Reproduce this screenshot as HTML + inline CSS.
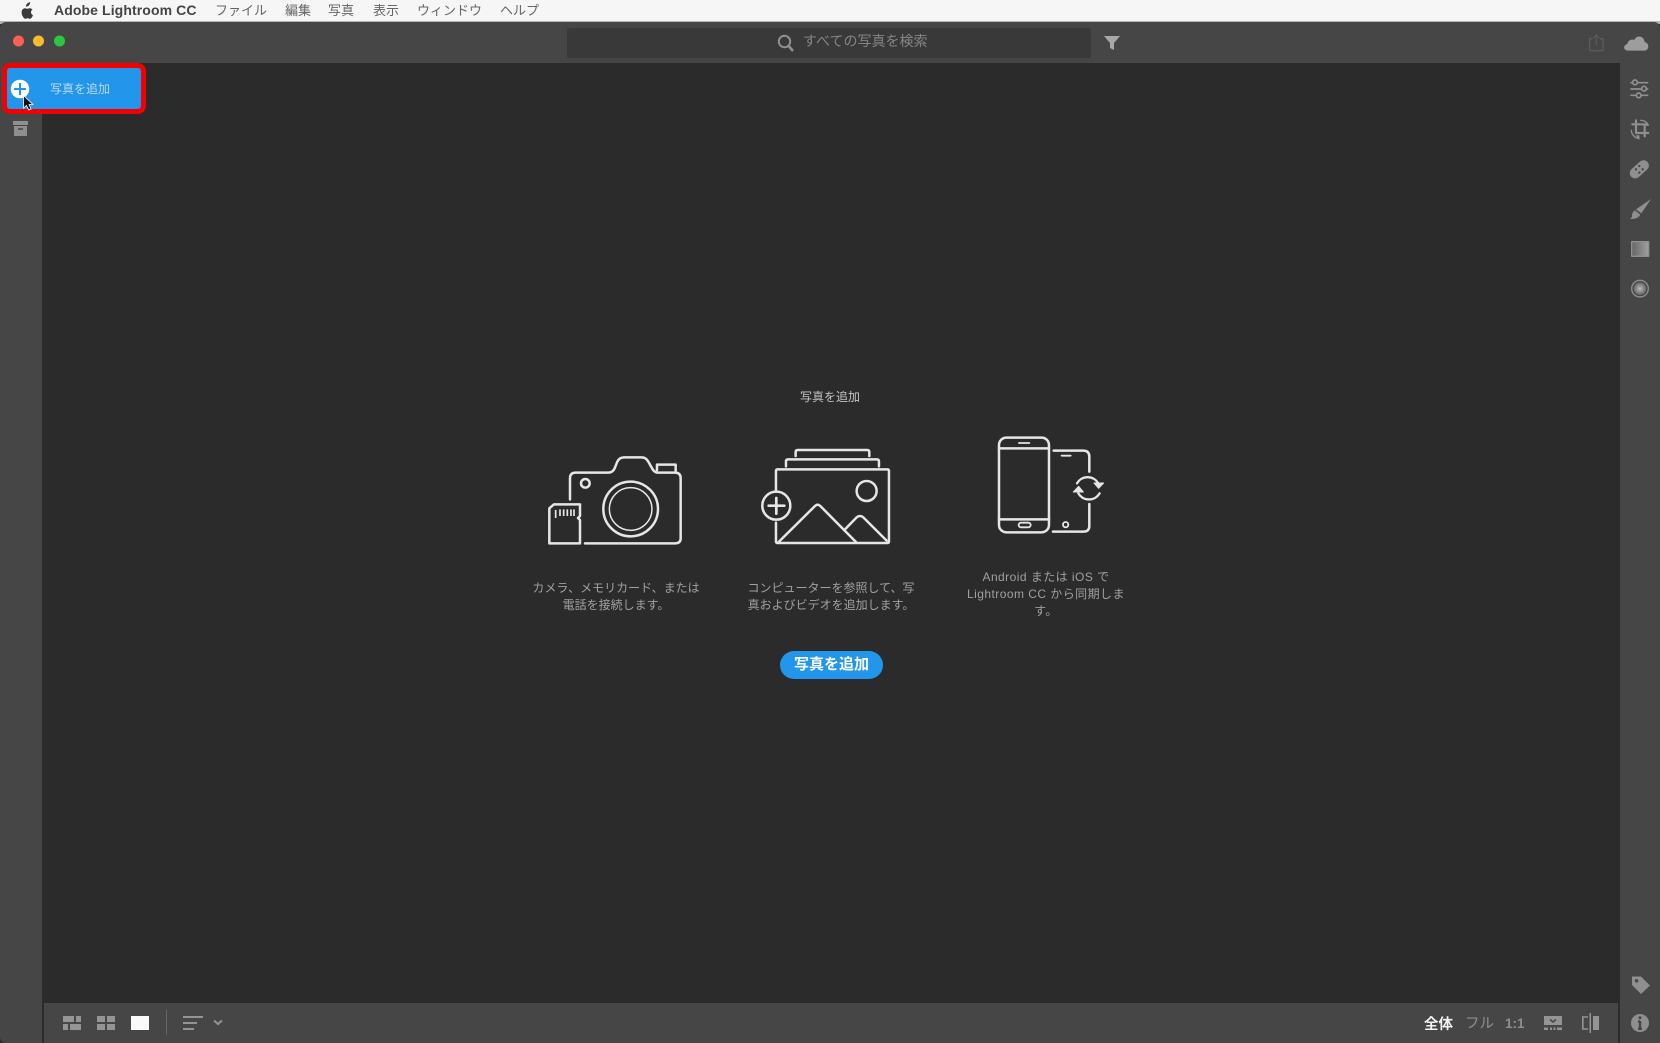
<!DOCTYPE html>
<html lang="ja"><head><meta charset="utf-8"><title>Lightroom</title>
<style>
html,body{margin:0;padding:0;background:#2b2b2b}
#p{position:relative;width:1660px;height:1043px;overflow:hidden;background:#2b2b2b;font-family:"Liberation Sans","Noto Sans CJK JP",sans-serif}
#p div,#p span{position:absolute;white-space:nowrap}
.m{top:1px;height:19px;line-height:19px;font-size:13px;color:#666}
.c{font-size:12px;line-height:17px;color:#a0a0a0;text-align:center}
svg{position:absolute;left:0;top:0;filter:blur(.3px)}
</style></head><body><div id="p">
<div style="left:0;top:0;width:1660px;height:24px;background:#b4b4b4"></div>
<div style="left:0;top:0;width:1660px;height:21px;background:#f6f6f6"></div>
<div style="left:0;top:22px;width:1660px;height:41px;background:#464646;border-radius:6px 6px 0 0"></div>
<div style="left:0;top:63px;width:42px;height:980px;background:#464646;border-radius:0 0 0 6px"></div>
<div style="left:1620px;top:63px;width:40px;height:980px;background:#464646"></div>
<div style="left:44px;top:1003px;width:1574px;height:40px;background:#464646"></div>
<div style="left:567px;top:28px;width:524px;height:30px;background:#393939;border-radius:2px"></div>

<div style="left:54px;top:1px;height:19px;line-height:19px;font-size:14px;font-weight:bold;color:#444;letter-spacing:.1px">Adobe Lightroom CC</div>
<div class="m" style="left:215px">ファイル</div>
<div class="m" style="left:285px">編集</div>
<div class="m" style="left:328px">写真</div>
<div class="m" style="left:373px">表示</div>
<div class="m" style="left:417px">ウィンドウ</div>
<div class="m" style="left:500px">ヘルプ</div>

<div style="left:803px;top:31px;height:20px;line-height:20px;font-size:14px;color:#858585">すべての写真を検索</div>

<div style="left:2px;top:63px;width:134px;height:41px;background:#2196ea;border:5.500px solid #f50000;border-radius:8px"></div>
<div style="left:50px;top:80px;height:18px;line-height:18px;font-size:12px;color:#b9dcf7">写真を追加</div>

<div class="c" style="left:760px;top:389px;width:140px;color:#c4c4c4;font-size:12px">写真を追加</div>
<div class="c" style="left:526px;top:580px;width:180px">カメラ、メモリカード、または<br>電話を接続します。</div>
<div class="c" style="left:741px;top:580px;width:180px">コンピューターを参照して、写<br>真およびビデオを追加します。</div>
<div class="c" style="left:956px;top:568.500px;width:180px;letter-spacing:.45px">Android または iOS で<br>Lightroom CC から同期しま<br>す。</div>
<div style="left:780px;top:651px;width:103px;height:28px;line-height:28px;background:#2196ea;border-radius:14px;color:#fff;font-weight:bold;font-size:15px;text-align:center">写真を追加</div>

<div style="left:1424px;top:1015px;height:20px;line-height:20px;font-size:14.5px;font-weight:bold;color:#f2f2f2">全体</div>
<div style="left:1465px;top:1013.500px;height:20px;line-height:20px;font-size:14.5px;color:#8f8f8f">フル</div>
<div style="left:1505px;top:1013.500px;height:20px;line-height:20px;font-size:13.5px;font-weight:bold;color:#8f8f8f">1:1</div>

<svg width="1660" height="1043" viewBox="0 0 1660 1043" fill="none">
<defs>
<linearGradient id="g1" x1="0" x2="1" y1="0" y2="0"><stop offset="0" stop-color="#666"/><stop offset="1" stop-color="#a0a0a0"/></linearGradient>
<radialGradient id="g2"><stop offset="0" stop-color="#bbb"/><stop offset="1" stop-color="#666"/></radialGradient>
</defs>
<!-- apple -->
<path transform="translate(-2 0)" fill="#3a3a3a" d="M31 5.200c-.8.9-2 1.500-3 1.400-.1-1.200.4-2.300 1.100-3 .7-.8 2-1.400 3-1.500.1 1.200-.4 2.300-1.100 3.100zM33 12.200c0-1.700 1.400-2.500 1.500-2.600-.8-1.200-2.100-1.300-2.500-1.400-1.100-.1-2.100.6-2.600.6-.6 0-1.400-.6-2.300-.6-1.200 0-2.300.7-2.900 1.700-1.200 2.200-.3 5.400.9 7.100.6.900 1.300 1.800 2.200 1.800.9 0 1.200-.6 2.300-.6s1.400.6 2.300.6c1 0 1.600-.9 2.100-1.700.7-1 1-1.900 1-2-.1 0-2-.8-2-2.900z"/>
<!-- traffic lights -->
<circle cx="18.500" cy="41" r="5.500" fill="#fc5f57"/><circle cx="38.500" cy="41" r="5.500" fill="#fdbc2e"/><circle cx="59.500" cy="41" r="5.500" fill="#2ac840"/>
<!-- search -->
<g stroke="#8f8f8f" stroke-width="2"><circle cx="784.500" cy="41.500" r="5.700"/><path d="M788.500 45.800L793 51" stroke-width="2.600"/></g>
<path fill="#a8a8a8" d="M1104 36H1120L1114 43V50L1110 48V43Z"/>
<!-- share & cloud -->
<g transform="translate(1570 18) scale(.3333)">
<path stroke="#5a5a5a" stroke-width="4" d="M68 62H59V98H99V62H90M79 82V52M70 60L79 51L88 60"/>
<path fill="#9d9d9d" d="M175 98C160 98 158 82 172 78C174 66 186 62 193 66C199 50 222 52 224 72C240 76 238 98 222 98Z"/>
</g>
<!-- add icon -->
<circle cx="20" cy="89" r="9.300" fill="#fff"/><path d="M14 89H26M20 83V95" stroke="#2196ea" stroke-width="2"/>
<path fill="#111" stroke="#fff" stroke-width=".8" d="M23.500 95.500V108L26.500 105.500L28.800 110L31 109L29 104.500H33Z"/>
<!-- archive -->
<path fill="#8f8f8f" d="M13 121H28V125H13ZM14 126H27V136H14Z"/><path stroke="#464646" stroke-width="1.500" d="M18 129H23"/>
<!-- camera -->
<g transform="translate(540 420) scale(.3333)" stroke="#e6e6e6" stroke-width="7.500" stroke-linejoin="round" stroke-linecap="round">
<path d="M90 238V175Q90 158 107 158H205Q218 158 224 145L232 125Q238 112 252 112H305Q318 112 325 125L338 148Q344 158 355 158H405Q422 158 422 175V355Q422 370 405 370H135"/>
<path d="M351 150V134H407V152"/>
<circle cx="136" cy="190" r="13"/><circle cx="272" cy="267" r="82"/><circle cx="272" cy="267" r="64" stroke-width="4.500"/>
<path d="M28 370V265L42 253H120V288L114 294L120 300V370Z"/>
<path d="M47 270V294M60 268V288M71 268V288M82 268V288M93 268V288M102 268V288" stroke-width="5" stroke-linecap="butt"/>
</g>
<!-- image -->
<g transform="translate(540 420) scale(.3333)" stroke="#e6e6e6" stroke-width="7.500" stroke-linejoin="round" stroke-linecap="round">
<path d="M767 108V96Q767 90 773 90H982Q988 90 988 96V108"/>
<path d="M738 139V124Q738 118 744 118H1011Q1017 118 1017 124V139"/>
<path d="M708 210V153Q708 148 713 148H1042Q1047 148 1047 153V364Q1047 369 1042 369H713Q708 369 708 364V308"/>
<circle cx="980" cy="213" r="30"/><circle cx="709" cy="257" r="42"/>
<path d="M686 257H733M709 234V281" stroke-width="8"/>
<path d="M716 366L825 258Q833 250 841 258L948 366"/>
<path d="M915 328L950 292Q960 284 970 292L1040 362"/>
</g>
<!-- phones -->
<g transform="translate(900 420) scale(.3333)" stroke="#e6e6e6" stroke-width="7.500" stroke-linejoin="round" stroke-linecap="round">
<rect x="297" y="53" width="150" height="284" rx="22"/>
<path d="M297 85H447M297 298H447"/><path d="M357 69H388" stroke-width="5.500"/>
<rect x="356" y="308" width="36" height="14" rx="7" stroke-width="5.500"/>
<path d="M461 92H550Q568 92 568 110V155M568 252V318Q568 335 550 335H459"/>
<path d="M485 107H512" stroke-width="5.500"/><circle cx="497" cy="314" r="8" stroke-width="5.500"/>
<path d="M531 190A37 37 0 0 1 595 190M599 220A37 37 0 0 1 535 220" stroke-width="7"/>
<path d="M582 189H611L596 205ZM520 216H550L536 199Z" fill="#e6e6e6" stroke-width="3"/>
</g>
<!-- right tools -->
<g transform="translate(1600 20) scale(.3333)" stroke="#8f8f8f" stroke-width="5" stroke-linecap="round" stroke-linejoin="round">
<path d="M93 188H143M93 207H143M93 226H143"/>
<circle cx="105" cy="187" r="7" fill="#464646"/><circle cx="132" cy="206" r="7" fill="#464646"/><circle cx="116" cy="226" r="7" fill="#464646"/>
<path d="M97 313H134V349M108 301V339H145" stroke-width="6.500"/>
<path d="M122 301A26 26 0 0 1 145 315M94 331A26 26 0 0 0 114 355" stroke-width="4"/>
<path d="M140 307L146 317L134 317ZM108 347L118 359L118 347Z" fill="#8f8f8f" stroke-width="1"/>
<rect x="85" y="432" width="66" height="32" rx="16" transform="rotate(-42 118 448)" fill="#8f8f8f" stroke="none"/>
<g fill="#464646" stroke="none"><circle cx="118" cy="438" r="3.500"/><circle cx="128" cy="448" r="3.500"/><circle cx="108" cy="448" r="3.500"/><circle cx="118" cy="458" r="3.500"/></g>
<path fill="#8f8f8f" stroke="none" d="M153 537L124 580L108 568ZM105 571L121 584Q114 598 90 597Q98 592 96 585Q97 575 105 571Z"/>
<rect x="95" y="665" width="51" height="44" fill="url(#g1)" stroke-width="4" stroke-linecap="butt"/>
<circle cx="120" cy="806" r="25" stroke-width="4"/><circle cx="120" cy="806" r="19" fill="url(#g2)" stroke="none"/>
</g>
<!-- tag + info -->
<path fill="#8f8f8f" fill-rule="evenodd" d="M1632 976.500H1641L1650 985.500L1641 994L1632 985ZM1636.500 979A1.800 1.800 0 1 0 1636.510 979Z"/>
<circle cx="1640" cy="1023" r="9" fill="#8f8f8f"/><path stroke="#464646" stroke-width="2.400" d="M1640 1021V1029M1638 1021.500H1640M1638 1028.800H1642"/><circle cx="1640" cy="1017.800" r="1.500" fill="#464646"/>
<!-- bottom left -->
<g fill="#949494">
<path d="M63 1016H74V1022H63ZM76 1016H81V1022H76ZM63 1024H68V1030H63ZM70 1024H81V1030H70Z"/>
<path d="M97 1016H105V1022H97ZM107 1016H115V1022H107ZM97 1024H105V1030H97ZM107 1024H115V1030H107Z"/>
<rect x="131" y="1016" width="18" height="14" fill="#fafafa"/>
<rect x="166" y="1010" width="1" height="25" fill="#666"/>
<path d="M183 1016H203V1018H183ZM183 1022H197V1024H183ZM183 1028H194V1030H183Z"/>
</g>
<path d="M214 1020.500L218 1024L222 1020.500" stroke="#949494" stroke-width="2"/>
<!-- bottom right -->
<g fill="#949494">
<path d="M1544 1016H1562V1025H1544Z"/>
<path d="M1544 1027.500H1548V1030H1544ZM1550 1027.500H1552V1030H1550ZM1553.500 1027.500H1555.500V1030H1553.500ZM1557 1027.500H1562V1030H1557Z"/>
<rect x="1593" y="1016" width="6" height="14"/>
<rect x="1589.500" y="1013" width="1.500" height="20"/>
</g>
<path d="M1550 1019.500L1553 1022L1556 1019.500" stroke="#464646" stroke-width="1.500"/>
<path d="M1588 1017H1582.800V1029H1588" stroke="#949494" stroke-width="1.600"/>
</svg>
</div></body></html>
